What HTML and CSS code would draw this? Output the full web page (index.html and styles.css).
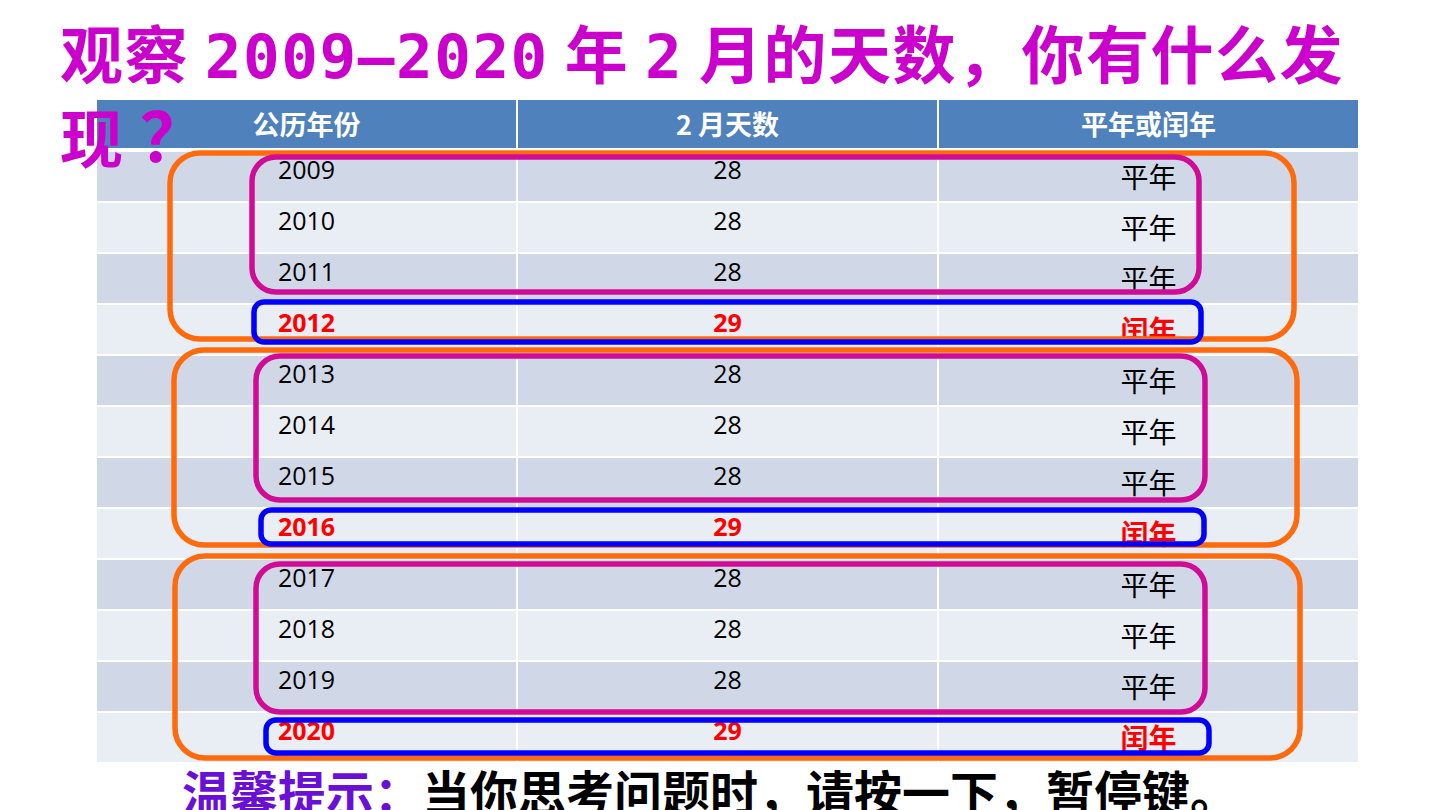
FILE: index.html
```html
<!DOCTYPE html>
<html lang="zh-CN">
<head>
<meta charset="utf-8">
<title>观察2月的天数</title>
<link rel="stylesheet" href="styles.css">
</head>
<body>
<div class="slide">
  <h1 class="title">观察 <span class="mono">2009—2020</span> 年 <span class="mono">2</span> 月的天数，你有什么发现<span class="qm">？</span></h1>

  <div class="table">
    <div class="th">公历年份</div>
    <div class="th">2 月天数</div>
    <div class="th">平年或闰年</div>

    <div class="td num odd">2009</div><div class="td num odd">28</div><div class="td cn odd">平年</div>
    <div class="td num even">2010</div><div class="td num even">28</div><div class="td cn even">平年</div>
    <div class="td num odd">2011</div><div class="td num odd">28</div><div class="td cn odd">平年</div>
    <div class="td num even leap">2012</div><div class="td num even leap">29</div><div class="td cn even leap">闰年</div>

    <div class="td num odd">2013</div><div class="td num odd">28</div><div class="td cn odd">平年</div>
    <div class="td num even">2014</div><div class="td num even">28</div><div class="td cn even">平年</div>
    <div class="td num odd">2015</div><div class="td num odd">28</div><div class="td cn odd">平年</div>
    <div class="td num even leap">2016</div><div class="td num even leap">29</div><div class="td cn even leap">闰年</div>

    <div class="td num odd">2017</div><div class="td num odd">28</div><div class="td cn odd">平年</div>
    <div class="td num even">2018</div><div class="td num even">28</div><div class="td cn even">平年</div>
    <div class="td num odd">2019</div><div class="td num odd">28</div><div class="td cn odd">平年</div>
    <div class="td num even leap">2020</div><div class="td num even leap">29</div><div class="td cn even leap">闰年</div>
  </div>

  <svg class="marks" width="1440" height="810" viewBox="0 0 1440 810" aria-hidden="true">
    <g fill="none" stroke-width="5.5">
      <rect class="m-orange" x="170" y="153" width="1124" height="186" rx="30"/>
      <rect class="m-pink" x="252" y="157" width="947" height="135" rx="24"/>
      <rect class="m-blue" x="254" y="302" width="947" height="40" rx="10"/>

      <rect class="m-orange" x="174" y="350" width="1123" height="195" rx="30"/>
      <rect class="m-pink" x="256" y="356" width="949" height="144" rx="24"/>
      <rect class="m-blue" x="261" y="510" width="943" height="34" rx="10"/>

      <rect class="m-orange" x="175" y="556" width="1125" height="202" rx="30"/>
      <rect class="m-pink" x="256" y="564" width="949" height="148" rx="24"/>
      <rect class="m-blue" x="266" y="720" width="943" height="33" rx="10"/>
    </g>
  </svg>

  <p class="tip"><span class="tip-lead">温馨提示：</span>当你思考问题时，请按一下，暂停键。</p>
</div>
</body>
</html>
```

FILE: styles.css
```css
html, body {
  margin: 0;
  padding: 0;
  background: #ffffff;
}

.slide {
  position: relative;
  width: 1440px;
  height: 810px;
  overflow: hidden;
  background: #ffffff;
  font-family: "Noto Sans CJK SC", sans-serif;
}

.title {
  position: relative;
  z-index: 3;
  margin: 0 0 0 60px;
  padding-top: 13px;
  height: 87px;
  width: 1360px;
  font-family: "Noto Sans CJK SC", sans-serif;
  font-size: 63px;
  font-weight: bold;
  letter-spacing: 1.5px;
  line-height: 76px;
  color: #cc00cc;
}

.title .mono {
  font-family: "DejaVu Sans Mono", monospace;
  font-size: 61px;
}

.title .qm {
  margin-left: 15px;
  font-size: 68px;
}

.table {
  position: relative;
  z-index: 1;
  margin-left: 97px;
  width: 1261px;
  display: grid;
  grid-template-columns: repeat(3, 419px);
  grid-template-rows: 50px repeat(12, 49px);
  column-gap: 2px;
  row-gap: 2px;
  background: #ffffff;
}

.th {
  height: 48px;
  margin-bottom: 2px;
  background: #4f81bd;
  color: #ffffff;
  font-family: "Noto Sans CJK SC", sans-serif;
  font-weight: bold;
  font-size: 27px;
  line-height: 48px;
  text-align: center;
}

.td {
  text-align: center;
  color: #000000;
  overflow: hidden;
}

.odd {
  background: #d0d8e8;
}

.even {
  background: #e9edf4;
}

.num {
  font-family: "Open Sans", "Noto Sans CJK SC", sans-serif;
  font-size: 25px;
  line-height: 34px;
}

.cn {
  font-family: "Noto Sans CJK SC", sans-serif;
  font-size: 28px;
  line-height: 49px;
}

.leap {
  color: #ff0000;
  font-weight: bold;
}

.marks {
  position: absolute;
  left: 0;
  top: 0;
  z-index: 2;
  pointer-events: none;
}

.m-orange {
  stroke: #ff6a0c;
}

.m-pink {
  stroke: #d00c96;
}

.m-blue {
  stroke: #0000ff;
}

.tip {
  position: relative;
  z-index: 3;
  margin: 0 0 0 182px;
  font-family: "Noto Sans CJK SC", sans-serif;
  font-size: 48px;
  font-weight: bold;
  line-height: 56px;
  color: #000000;
  white-space: nowrap;
}

.tip-lead {
  color: #6a10d6;
}
```
